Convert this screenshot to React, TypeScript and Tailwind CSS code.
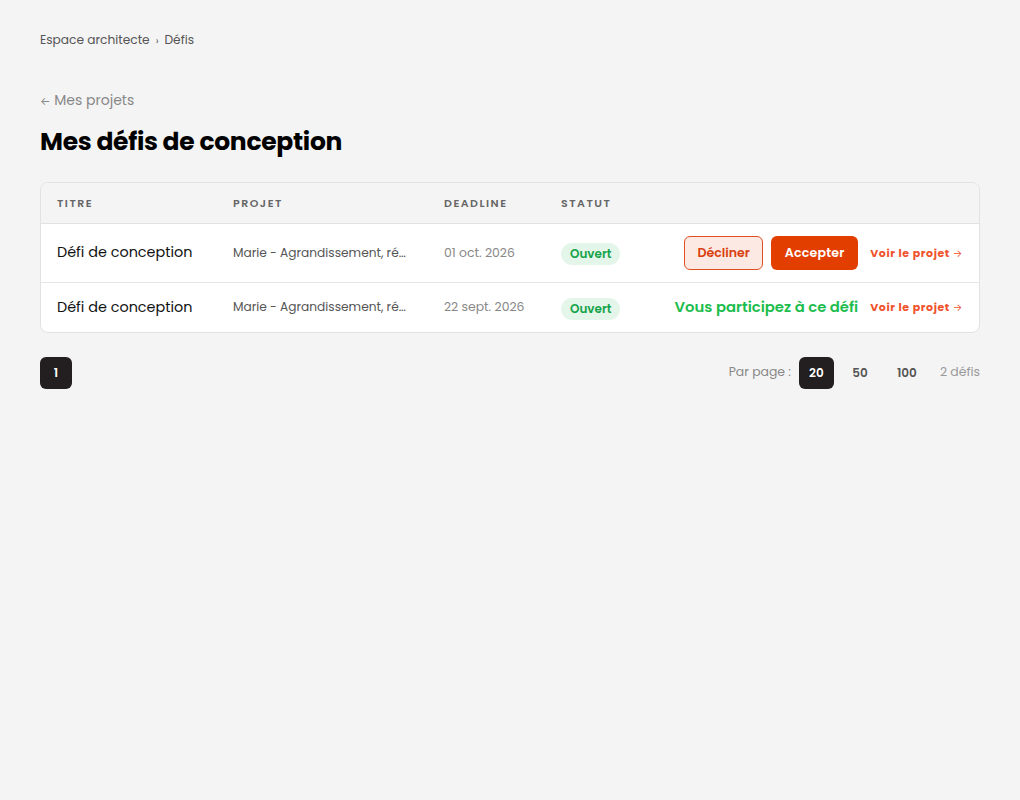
import React from 'react';

type Defi = {
  id: number;
  titre: string;
  projet: string;
  deadline: string;
  statut: string;
  participe: boolean;
};

const defis: Defi[] = [
  { id: 1, titre: 'Défi de conception', projet: 'Marie - Agrandissement, rénovation maison', deadline: '01 oct. 2026', statut: 'Ouvert', participe: false },
  { id: 2, titre: 'Défi de conception', projet: 'Marie - Agrandissement, rénovation maison', deadline: '22 sept. 2026', statut: 'Ouvert', participe: true },
];

function VoirProjet() {
  return (
    <a href="#" className="whitespace-nowrap text-[11px] font-bold tracking-[0.6px] text-[#f0522b]">
      Voir le projet <span className="text-[10px] font-normal">→</span>
    </a>
  );
}

export default function App() {
  return (
    <div className="min-h-screen bg-[#f4f4f4] px-10 pt-[31px] font-['Poppins','Inter',sans-serif] text-[#111]">
      {/* fil d'ariane */}
      <nav className="flex items-center gap-[6px] text-[12.2px] text-[#555]">
        <span>Espace architecte</span>
        <span className="text-[10px]">›</span>
        <span>Défis</span>
      </nav>

      <a href="#" className="mt-[41px] block text-[14px] text-[#888]">
        <span className="text-[11px]">←</span> Mes projets
      </a>

      <h1 className="mt-[12px] text-[25px] font-bold tracking-[-0.3px] text-black">Mes défis de conception</h1>

      <div className="mt-[21px] overflow-hidden rounded-[8px] border border-[#e2e2e2] bg-white">
        <table className="w-full border-collapse text-left">
          <thead>
            <tr className="h-[41px] border-b border-[#e2e2e2] bg-[#f4f4f4] text-[11px] font-bold uppercase tracking-[1.5px] text-[#666]">
              <th className="w-[192px] pl-4 font-semibold">Titre</th>
              <th className="w-[211px] font-semibold">Projet</th>
              <th className="w-[117px] font-semibold">Deadline</th>
              <th className="font-semibold">Statut</th>
              <th />
            </tr>
          </thead>
          <tbody>
            {defis.map((d, i) => (
              <tr key={d.id} className={i === 0 ? 'h-[59px] border-b border-[#e6e6e6]' : 'h-[49px]'}>
                <td className="pl-4 text-[14.4px] text-[#111]">{d.titre}</td>
                <td className="pr-4 text-[12.2px] text-[#555]">
                  <div className="max-w-[174px] truncate">{d.projet}</div>
                </td>
                <td className="text-[12.4px] text-[#888]">{d.deadline}</td>
                <td>
                  <span className="inline-block rounded-full bg-[#e4f6e9] px-[9px] py-[2px] text-[12px] font-semibold text-[#15a34a]">
                    {d.statut}
                  </span>
                </td>
                <td className="pr-4">
                  <div className="flex items-center justify-end gap-3">
                    {d.participe ? (
                      <span className="text-[14.8px] font-semibold text-[#1cbd4c]">Vous participez à ce défi</span>
                    ) : (
                      <div className="flex gap-2">
                        <button className="h-[34px] w-[79px] rounded-[6px] border border-[#e0501f] bg-[#fde9e3] text-[12.6px] font-semibold text-[#d9400f]">
                          Décliner
                        </button>
                        <button className="h-[34px] w-[87px] rounded-[6px] bg-[#e23e00] text-[12.6px] font-semibold tracking-[0.2px] text-white">
                          Accepter
                        </button>
                      </div>
                    )}
                    <VoirProjet />
                  </div>
                </td>
              </tr>
            ))}
          </tbody>
        </table>
      </div>

      {/* pagination */}
      <div className="mt-[24px] flex items-center justify-between">
        <button className="h-8 w-8 rounded-[6px] bg-[#231f20] text-[12px] font-semibold text-white">1</button>
        <div className="flex items-center text-[12.4px]">
          <span className="mr-2 text-[#888]">Par page :</span>
          <button className="h-8 w-[35px] rounded-[6px] bg-[#231f20] text-[12px] font-semibold text-white">20</button>
          <button className="h-8 w-[52px] text-[12px] font-semibold text-[#555]">50</button>
          <button className="h-8 w-[42px] text-[12px] font-semibold text-[#555]">100</button>
          <span className="ml-3 text-[#999]">2 défis</span>
        </div>
      </div>
    </div>
  );
}
